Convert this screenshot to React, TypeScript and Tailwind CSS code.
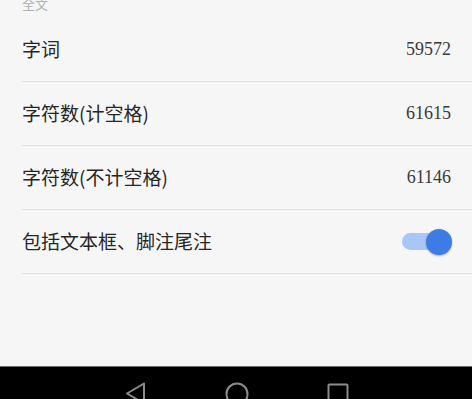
import React from "react";

type Row = { label: string; value?: string; toggle?: boolean };

const rows: Row[] = [
  { label: "字词", value: "59572" },
  { label: "字符数(计空格)", value: "61615" },
  { label: "字符数(不计空格)", value: "61146" },
  { label: "包括文本框、脚注尾注", toggle: true },
];

const cjk = { fontFamily: '"Noto Sans CJK SC", "Noto Sans", sans-serif' };
const digits = { fontFamily: '"Liberation Serif", "DejaVu Serif", serif' };

function Toggle() {
  return (
    <span className="relative flex h-[26px] w-[50px] items-center">
      <span className="ml-[1px] h-[17px] w-[38px] rounded-full bg-[#a9c6f7]" />
      <span className="absolute right-[-1px] top-0 h-[26px] w-[26px] rounded-full bg-[#3d7be6] shadow-[0_1px_2px_rgba(0,0,0,0.3)]" />
    </span>
  );
}

export default function App() {
  return (
    <div className="flex h-[399px] w-[472px] flex-col overflow-hidden bg-[#f6f6f6]" style={cjk}>
      <div className="h-[18px] pl-[22px]">
        <span className="-mt-[3px] block text-[13px] leading-none text-[#b0b0b0]">全文</span>
      </div>
      {rows.map((r) => (
        <div
          key={r.label}
          className="ml-[22px] flex h-16 items-center justify-between border-b border-[#e2e2e2] pr-[21px]"
        >
          <span className="text-[19px] text-[#262626]">{r.label}</span>
          {r.toggle ? (
            <Toggle />
          ) : (
            <span className="text-[18px] text-[#3a3a3a]" style={digits}>
              {r.value}
            </span>
          )}
        </div>
      ))}
      <div className="flex-1" />
      <div className="flex h-[33px] shrink-0 items-start border-t border-[#6a6a6a] bg-black pt-[15px]">
        <svg className="ml-[125px]" width="21" height="24" viewBox="0 0 21 24" fill="none" stroke="#8c8c8c" strokeWidth="2" strokeLinejoin="round">
          <path d="M19 1.5 L2 11.5 L19 21.5 Z" />
        </svg>
        <svg className="ml-[79px]" width="24" height="24" viewBox="0 0 24 24" fill="none" stroke="#8c8c8c" strokeWidth="2">
          <circle cx="12" cy="12" r="10.5" />
        </svg>
        <svg className="ml-[78px] mt-[1px]" width="22" height="22" viewBox="0 0 22 22" fill="none" stroke="#8c8c8c" strokeWidth="2">
          <rect x="1.5" y="1.5" width="19" height="19" rx="1" />
        </svg>
      </div>
    </div>
  );
}
